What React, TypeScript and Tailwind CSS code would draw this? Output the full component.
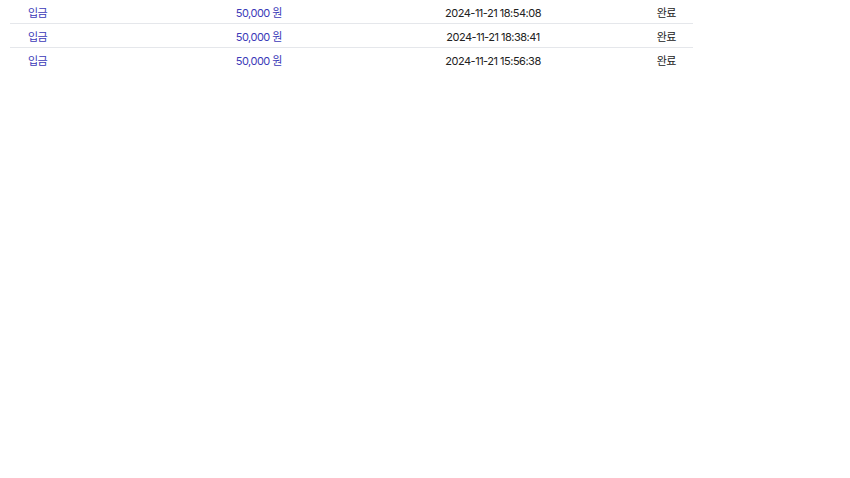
import React from 'react';

const rows = [
  { type: '입금', amount: '50,000 원', date: '2024-11-21 18:54:08', status: '완료' },
  { type: '입금', amount: '50,000 원', date: '2024-11-21 18:38:41', status: '완료' },
  { type: '입금', amount: '50,000 원', date: '2024-11-21 15:56:38', status: '완료' },
];

export default function App() {
  return (
    <div className="w-[850px] h-[478px] bg-white font-['Inter','Noto_Sans_CJK_KR',sans-serif] text-[11px] tracking-[-0.5px]">
      <div className="ml-[10px] w-[683px] divide-y divide-[#e5e7eb]">
        {rows.map((r, i) => (
          <div key={i} className="flex h-[24px] items-center pt-[3px]">
            <div className="w-[162px] pl-[18px] text-[#3c3ab8]">{r.type}</div>
            <div className="w-[110px] text-right text-[#3c3ab8]">{r.amount}</div>
            <div className="w-[322px] pl-[100px] text-center text-[#222]">{r.date}</div>
            <div className="flex-1 pr-[17px] text-right text-[#222]">{r.status}</div>
          </div>
        ))}
      </div>
    </div>
  );
}
